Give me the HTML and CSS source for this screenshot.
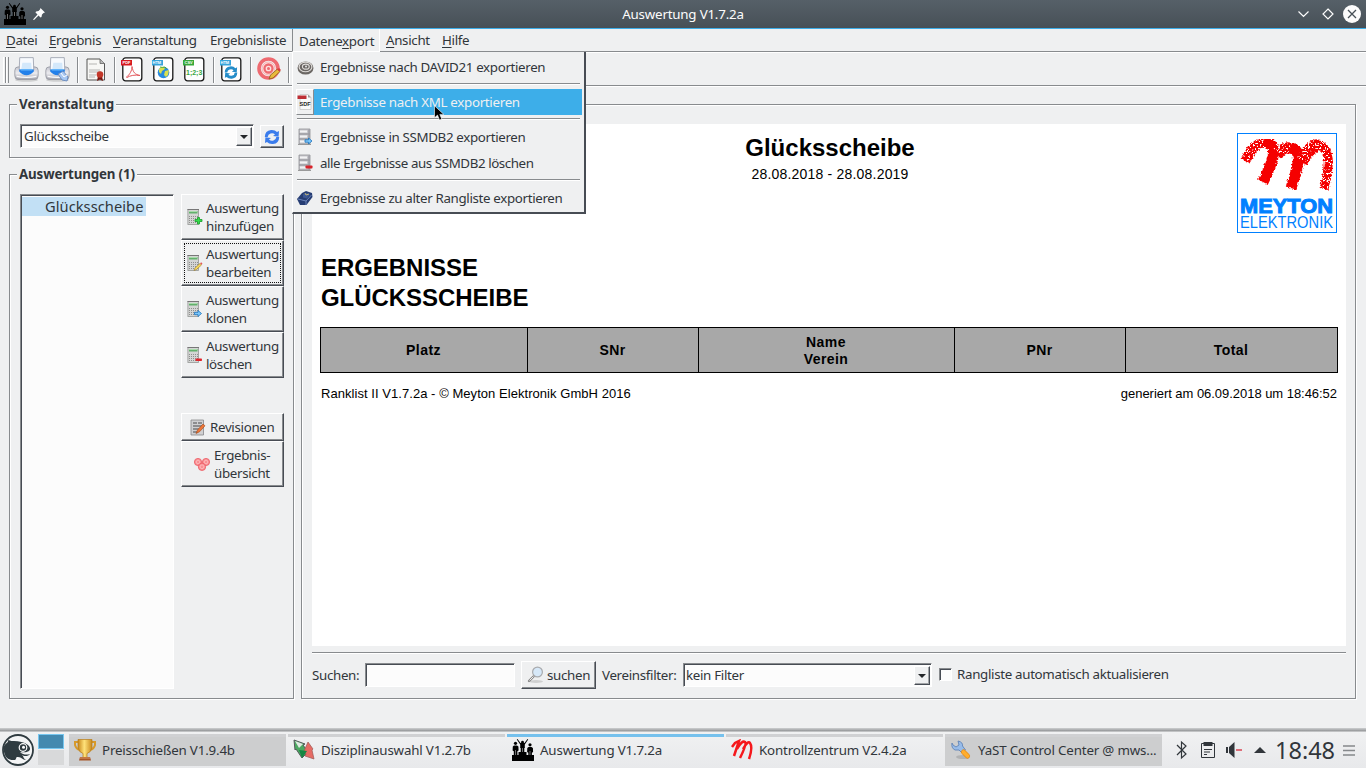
FILE: index.html
```html
<!DOCTYPE html>
<html lang="de">
<head>
<meta charset="utf-8">
<title>Auswertung V1.7.2a</title>
<link rel="stylesheet" href="styles.css">
</head>
<body>
<svg width="0" height="0" class="defs">
  <defs>
    <linearGradient id="gGrey" x1="0" y1="0" x2="0" y2="1"><stop offset="0" stop-color="#c4c5cf"/><stop offset=".5" stop-color="#ececf0"/><stop offset="1" stop-color="#a4a5ae"/></linearGradient>
    <linearGradient id="gGold" x1="0" y1="0" x2="1" y2="0"><stop offset="0" stop-color="#c8871a"/><stop offset=".45" stop-color="#ffe27a"/><stop offset="1" stop-color="#c98a1d"/></linearGradient>
    <filter id="crayon" x="-5%" y="-5%" width="110%" height="110%">
      <feTurbulence type="fractalNoise" baseFrequency=".45" numOctaves="2" seed="4" result="n"/>
      <feDisplacementMap in="SourceGraphic" in2="n" scale="4" xChannelSelector="R" yChannelSelector="G"/>
    </filter>
    <filter id="speckle" x="-5%" y="-5%" width="110%" height="110%">
      <feTurbulence type="fractalNoise" baseFrequency=".6" numOctaves="2" seed="9"/>
      <feColorMatrix values="0 0 0 0 1  0 0 0 0 1  0 0 0 0 1  12 0 0 0 -6.8"/>
      <feComposite in2="SourceGraphic" operator="in"/>
    </filter>
    <symbol id="podium" viewBox="0 0 22 22">
      <path d="M0 16h6.500v-3h8v3h7.500v6H0z"/><circle cx="3.500" cy="4.300" r="1.600"/><circle cx="10.500" cy="3.200" r="1.400"/><circle cx="18" cy="5.800" r="1.600"/>
      <path d="M2 6.500h3l1.400 1 .2 4-1.200.8v4H1.800v-4L.6 11.500l.2-4zM5.500 0l3 4h4l3-4 .7.500-3.400 5V9H8.200V5.500L4.800.5zM16.500 8h3l1.400 1 .2 4-1.200.8v3h-3.600v-3L15.100 13l.2-4z"/>
      <path d="M8.700 8.500h3.600V14H8.700z"/><path d="M3.500 11v5M10.500 9v4M18 12v4" stroke="#999" stroke-width=".7"/>
    </symbol>
    <symbol id="printer" viewBox="0 0 24 24">
      <ellipse cx="12" cy="22" rx="11" ry="1.800" fill="#0002"/>
      <path d="M.8 13Q.8 9.500 4 9.500h16q3.200 0 3.200 3.500v5q0 3.500-3 3.500H3.800q-3 0-3-3.500z" fill="url(#gGrey)" stroke="#9496a0" stroke-width=".8"/>
      <path d="M5.500.6h13l.5 12H5z" fill="#f7fafe" stroke="#9aa0ad" stroke-width=".8"/>
      <path d="M8 5.500h8.500l.5 6H7z" fill="#d3e8fb"/><path d="M5 12h14v2q-3 3.500-7 3.500T5 14z" fill="#2380ea"/><path d="M6.500 11.500h11V13h-11z" fill="#63b4fb"/>
      <path d="M2.500 18.500q9.500 2 19 0" stroke="#fbfbfd" stroke-width="1.200" fill="none"/>
    </symbol>
    <symbol id="page" viewBox="0 0 22 25">
      <rect x="1.800" y=".8" width="19" height="23" rx="2.800" fill="#fefefe" stroke="#171717" stroke-width="1.300"/>
    </symbol>
    <symbol id="sync" viewBox="0 0 16 16">
      <path d="M.8 8Q1 1.500 7 1q4-.3 6 2l2-1-.4 5.700L9 7l2-1.500Q9 3.500 6.500 4.500 4 5 3.700 8z"/>
      <path d="M15.200 8Q15 14.500 9 15q-4 .3-6-2l-2 1 .4-5.700L7 9l-2 1.500q2 2 4.500 1 2.500-.5 2.800-3.500z"/>
    </symbol>
    <symbol id="calc" viewBox="0 0 16 18">
      <rect x=".9" y="1.500" width="10.600" height="15" fill="#d4d5d4" stroke="#959795" stroke-width=".8"/><path d="M.5 1.500h11.500" stroke="#777"/>
      <rect x="2" y="3" width="8.500" height="2.500" fill="#62b06c"/><path d="M2 3.500h8" stroke="#a7dbaa"/>
      <path d="M2 8.500h9M2 10.500h9M2 12.500h9M2 14.500h9" stroke="#8e8f8e" stroke-dasharray="1 1"/>
    </symbol>
    <symbol id="db" viewBox="0 0 16 18">
      <path d="M2 1h11v15H2z" fill="#c6c6cb" stroke="#909096" stroke-width=".8"/>
      <path d="M2 6h11M2 11h11" stroke="#88888f"/><path d="M3 3.500h7M3 8.500h7M3 13.500h7" stroke="#f2f2f4" stroke-width="2"/><path d="M12 1.500v14" stroke="#9c9ca4" stroke-width="1.500"/>
      <path d="M1 16.500h13" stroke="#999"/>
    </symbol>
    <symbol id="arrow" viewBox="0 0 8 7"><path d="M.5 2.300H4V.5l3.500 3L4 6.500V4.700H.5z" fill="#7cc7fa" stroke="#1c72bd" stroke-width=".8"/></symbol>
  </defs>
</svg>

<header class="titlebar">
  <svg class="title-app" width="22" height="22"><use href="#podium"/></svg>
  <svg class="pin" width="12" height="12" viewBox="0 0 12 12"><path d="M7.500 0 12 4.500 10.500 5 9 6.500 8.500 9 7.500 9.500 5.500 7.500 1 12 0 11.500 4.500 6.500 2.500 4.500 3 3.500 5.500 3 7 1.500z" fill="#fcfcfc"/></svg>
  <span class="title-text">Auswertung V1.7.2a</span>
  <svg class="winbtns" width="66" height="20" viewBox="0 0 66 20" fill="none" stroke="#fcfcfc" stroke-width="1.200"><path d="m1.500 7.500 5 5 5-5M31 5l5 5-5 5-5-5z"/><circle cx="55" cy="10" r="9" fill="#fcfcfc" stroke="none"/><path d="m51 6 8 8m0-8-8 8" stroke="#475057" stroke-width="1.300"/></svg>
</header>

<nav class="menubar">
  <span class="m1"><u>D</u>atei</span><span class="m2"><u>E</u>rgebnis</span><span class="m3"><u>V</u>eranstaltung</span><span class="m4">Ergebnisliste</span><span class="m5">Datene<u>x</u>port</span><span class="m6"><u>A</u>nsicht</span><span class="m7"><u>H</u>ilfe</span>
</nav>

<div class="toolbar">
  <i class="grip"></i><i class="grip"></i>
  <svg class="t-print" width="25" height="25"><use href="#printer"/></svg>
  <svg class="t-print2" width="25" height="25" viewBox="0 0 25 25"><use href="#printer" width="25" height="25"/><path d="M13 17l5-3 5 6-1 4-5-1z" fill="#a8c8f3" stroke="#5a7fb8" stroke-width=".8"/><path d="m16 16 3 4 3-2" stroke="#fff" fill="none"/></svg>
  <i class="tsep s1"></i>
  <svg width="20" height="24" viewBox="0 0 20 24"><path d="M1 1h13l4.500 4.500V22H1z" fill="#f7f7f5" stroke="#444" stroke-width=".9"/><path d="M14 1v4.500h4.500" fill="#bbb" stroke="#555" stroke-width=".7"/><path d="M3 6h8M3 12h11M3 14h12M3 17h7M3 19h6" stroke="#999" stroke-width=".7"/><path d="m12 18-1 5 3-1.500 3 1.500-1-5z" fill="#7b1710"/><circle cx="14" cy="16.500" r="3.300" fill="#c3382a"/></svg>
  <i class="tsep s2"></i>
  <svg class="t-pdf" width="22" height="25" viewBox="0 0 22 25"><use href="#page"/><path d="M0 3h11v5.500H0z" fill="#d71920"/><text x="1.500" y="7.300" class="tag">PDF</text><path d="M5 20.500c4-3 6-7 6-11 1 6 3 8 8 9-5-1-10 0-13 2" fill="none" stroke="#e2575b" stroke-width="1"/></svg>
  <svg class="t-html" width="22" height="25" viewBox="0 0 22 25"><use href="#page"/><path d="M0 3h11v5.500H0z" fill="#36a5dc"/><text x=".5" y="7.300" class="tag">HTM</text><circle cx="11.500" cy="15.500" r="5.800" fill="#278be0"/><path d="M7 12q3-3 5-2l1 2-3 2-1 3-2-2zM13 14l4-1-1 5-2 2-2-2z" fill="#d9df4f"/><path d="M8 10q3 1 5 0l2 2" stroke="#54ad36" fill="none"/></svg>
  <svg class="t-csv" width="22" height="25" viewBox="0 0 22 25"><use href="#page"/><path d="M0 3h11v5.500H0z" fill="#37a93b"/><text x="1.500" y="7.300" class="tag">CSV</text><text x="3" y="17.500" class="csv">1;2;3</text></svg>
  <i class="tsep s3"></i>
  <svg class="t-sync" width="22" height="25" viewBox="0 0 22 25"><use href="#page"/><path d="M0 3h11v5.500H0z" fill="#36a5dc"/><text x=".5" y="7.300" class="tag">HTM</text><use href="#sync" x="4" y="8.500" width="14" height="14" fill="#258dc9"/></svg>
  <i class="tsep s4"></i>
  <svg class="t-target" width="25" height="25" viewBox="0 0 25 25"><circle cx="11.500" cy="11.500" r="9.500" fill="none" stroke="#ee6a70" stroke-width="3.600"/><circle cx="11.500" cy="11.500" r="6.500" fill="#fde1df" stroke="#f9b4b3"/><circle cx="11.500" cy="11.500" r="4" fill="none" stroke="#ee6a70" stroke-width="2.300"/><circle cx="11.500" cy="11.500" r="1.500" fill="#ee6a70"/><path d="m12 22 1.500-4 7-6 2.500 2.500-7 6.500z" fill="#e8b93b" stroke="#8b5a1b" stroke-width=".8"/><path d="m20 12.500 2-1.500 2 2-1.500 1.500z" fill="#d93d3d"/></svg>
  <i class="tsep s5"></i>
</div>

<main class="main">
  <section class="left">
    <div class="group g-event">
      <b class="legend">Veranstaltung</b>
      <div class="combo c-event"><span>Glücksscheibe</span><i class="drop"></i></div>
      <div class="btn refresh"><svg width="16" height="16" fill="#3a7cec"><use href="#sync"/></svg></div>
    </div>
    <div class="group g-list">
      <b class="legend">Auswertungen (1)</b>
      <div class="list"><span class="sel">Glücksscheibe</span></div>
      <div class="buttons">
        <div class="btn big"><svg width="16" height="18"><use href="#calc"/><path d="M10.500 9.500h2v2h2.500v2h-2.500V16h-2v-2.500H8v-2h2.500z" fill="#35dd4c" stroke="#169c2b" stroke-width=".8"/></svg><span>Auswertung<br>hinzufügen</span></div>
        <div class="btn big focus"><svg width="16" height="18"><use href="#calc"/><path d="m7 16.500 1-2.500 5-4.500 1.500 1.500-5 4.500z" fill="#f8dc5c" stroke="#9a7628" stroke-width=".6"/><path d="m13 9.200 1.200-1 1.300 1.500-1 1z" fill="#e35858"/></svg><span>Auswertung<br>bearbeiten</span></div>
        <div class="btn big"><svg width="16" height="18"><use href="#calc"/><use href="#arrow" x="6.500" y="10" width="9" height="7"/></svg><span>Auswertung<br>klonen</span></div>
        <div class="btn big"><svg width="16" height="18"><use href="#calc"/><rect x="8.500" y="12.500" width="6.500" height="2.500" rx=".8" fill="#e0252c"/></svg><span>Auswertung<br>löschen</span></div>
        <div class="btn rev"><svg width="16" height="17" viewBox="0 0 16 17"><path d="M1 1h12.500v15H1z" fill="#d0d0d2" stroke="#88888b" stroke-width=".8"/><path d="M3 4h4M8 4h4M3 7h9M3 10h6M3 13h5" stroke="#77777a" stroke-width="1.400"/><path d="m6 14.500 1.500-3.500 5.500-6 2 1.800-5.500 6z" fill="#ee7739" stroke="#9e4719" stroke-width=".6"/></svg><span>Revisionen</span></div>
        <div class="btn over"><svg width="16" height="13" viewBox="0 0 16 13" fill="#f98f93" stroke="#ec5962" stroke-width=".8"><circle cx="4" cy="4" r="3.600"/><circle cx="12" cy="4" r="3.600"/><circle cx="8" cy="8.800" r="3.700"/><g fill="none" stroke="#ffc7c7" stroke-width=".7"><circle cx="4" cy="4" r="1.800"/><circle cx="12" cy="4" r="1.800"/><circle cx="8" cy="8.800" r="1.900"/></g></svg><span>Ergebnis-<br>übersicht</span></div>
      </div>
    </div>
  </section>

  <section class="group right">
    <article class="doc">
      <div class="doc-head">
        <div class="doc-title"><h1>Glücksscheibe</h1><p>28.08.2018 - 28.08.2019</p></div>
        <svg class="logo" width="100" height="100" viewBox="0 0 100 100">
          <rect x=".5" y=".5" width="99" height="99" fill="#fff" stroke="#0080ff"/>
          <g filter="url(#crayon)" fill="none" stroke="#f50000" stroke-linejoin="round">
            <path d="M8 28C14 17 20 10 27 9" stroke-width="10"/><path d="M26 9C38 10 42 17 26 49" stroke-width="11"/>
            <path d="M40 23C44 16 48 14 53 15 65 17 63 28 54 55" stroke-width="11"/>
            <path d="M64 29C70 17 77 12 82 13" stroke-width="13"/><path d="M81 12C94 15 93 32 87 56" stroke-width="9"/>
          </g>
          <g filter="url(#speckle)" fill="none" stroke="#000">
            <path d="M6 29C13 17 18 10 27 9M41 19C44 15 47 13 53 15M65 27C70 15 76 11 82 12 95 16 93 34 88 57" stroke-width="11"/>
          </g>
          <text x="3" y="80" textLength="93" lengthAdjust="spacingAndGlyphs" class="logo1">MEYTON</text>
          <text x="3" y="95" textLength="93" lengthAdjust="spacingAndGlyphs" class="logo2">ELEKTRONIK</text>
        </svg>
      </div>
      <h2>ERGEBNISSE<br>GLÜCKSSCHEIBE</h2>
      <div class="table"><span>Platz</span><span>SNr</span><span>Name<br>Verein</span><span>PNr</span><span>Total</span></div>
      <div class="foot"><span class="f1">Ranklist II V1.7.2a - © Meyton Elektronik GmbH 2016</span><span class="f2">generiert am 06.09.2018 um 18:46:52</span></div>
    </article>
    <hr class="rule">
    <div class="search">
      <label class="l1">Suchen:</label><div class="input"></div>
      <div class="btn find"><svg width="18" height="18" viewBox="0 0 18 18"><ellipse cx="9" cy="15.500" rx="7" ry="1.500" fill="#0002"/><path d="m2 15 5-5" stroke="#888" stroke-width="2.400" stroke-linecap="round"/><path d="m2.500 14.500 4-4" stroke="#eee"/><circle cx="10.500" cy="6" r="4.900" fill="#d6e8f8" stroke="#a9abae" stroke-width="1.200"/></svg><span>suchen</span></div>
      <label class="l2">Vereinsfilter:</label>
      <div class="combo c-filter"><span>kein Filter</span><i class="drop"></i></div>
      <i class="check"></i><label class="l3">Rangliste automatisch aktualisieren</label>
    </div>
  </section>
</main>

<footer class="panel">
  <svg class="suse" width="32" height="32" viewBox="0 0 32 32"><circle cx="16" cy="16" r="15" fill="#f4f5f6" stroke="#2f3b40" stroke-width="1.800"/><path d="M2 12C4 9 7 8 6 6c3 1 4 1 6 1 5 0 10 1 14 4 2 2 3 4 1 6-3 2-7 1-9 1 3 3 7 3 10 2-2 3-7 2-8 1 2 2 1 3 4 5-4 0-4-3-8-3-3 0-1 2-3 3-5 0-9 0-11-8z" fill="#2f3b40"/><circle cx="21" cy="13.500" r="3.800" fill="#2f3b40" stroke="#fff" stroke-width="1.200"/><circle cx="21.500" cy="13.300" r="1.500" fill="#fff"/></svg>
  <div class="pager"><i></i><i></i></div>
  <div class="tasks">
    <div class="task min"><svg width="22" height="22" viewBox="0 0 22 22"><path d="M4 3H1v3q1 4 5 5M18 3h3v3q-1 4-5 5" fill="none" stroke="#d79a2b" stroke-width="2"/><path d="M4 .5h14v8q-1 5-5 6v4H9v-4q-4-1-5-6z" fill="url(#gGold)" stroke="#b67b1b" stroke-width=".7"/><path d="M6 18h10l1 3.500H5z" fill="#a75426"/><path d="M6 19h10" stroke="#dc9a67"/></svg><span>Preisschießen V1.9.4b</span></div>
    <div class="task"><svg width="22" height="22" viewBox="0 0 22 22"><path d="m1 1 11 4-2 1 5 7-6 6-6-9-1 1z" fill="#4ba861" stroke="#55595a"/><path d="m2 2 8 3-4 4z" fill="#dfe9e1"/><path d="m15 3 5 7-1 1 2 9-9-3 1-2-2-3z" fill="#e66b64" stroke="#9b5955" stroke-width=".7"/><path d="m6 11 8 1-5 7z" fill="#168642"/></svg><span>Disziplinauswahl V1.2.7b</span></div>
    <div class="task active"><svg width="22" height="22"><use href="#podium"/></svg><span>Auswertung V1.7.2a</span></div>
    <div class="task"><svg width="22" height="22" viewBox="0 0 22 22"><path d="M1 8 4 4 8 2 3 17M6 10Q11 1 14 3q2 2-5 16m3-9q5-9 7-6 3 4-1 16" fill="none" stroke="#f5181c" stroke-width="2.500"/></svg><span>Kontrollzentrum V2.4.2a</span></div>
    <div class="task min"><svg width="22" height="22" viewBox="0 0 22 22"><ellipse cx="13" cy="18" rx="7" ry="2" fill="#0002"/><path d="M2 4q-1 5 3 7l4 0 3 3 3.500-3-3-4q.5-4-4.500-5l1 4-3 2-3-2z" fill="#98bce9" stroke="#6085b8" stroke-width=".9"/><path d="m13.500 13 4 4" stroke="#e58a14" stroke-width="5" stroke-linecap="round"/><path d="m13.500 13 4 4" stroke="#ffad2e" stroke-width="3.700" stroke-linecap="round"/></svg><span>YaST Control Center @ mws...</span></div>
  </div>
  <svg class="tray" width="92" height="20" viewBox="0 0 92 20"><path d="M1 5 10 14 5.500 18V2L10 6 1 15" fill="none" stroke="#31363b" stroke-width="1.200"/><path d="M25.500 3.500h13v14h-13z" fill="none" stroke="#31363b"/><path d="M27.500 2h9v4h-9z" fill="#31363b"/><path d="M28 9.500h8M28 12h6M28 14.500h3" stroke="#31363b"/><path d="M50 7h2v6h-2zM53 7l5.500-5v16l-5.500-5z" fill="#31363b"/><path d="M60 10h6" stroke="#da4453" stroke-width="1.500"/><path d="m78 13 6-6 6 6z" fill="#31363b"/></svg>
  <span class="clock">18:48</span>
  <svg class="burger" width="12" height="11" viewBox="0 0 12 11"><path d="M0 1h12M0 5.500h12M0 10h12" stroke="#85888b" stroke-width="1.600"/></svg>
</footer>

<div class="popup">
  <div class="item"><i class="ico"><svg width="17" height="17" viewBox="0 0 16 16"><ellipse cx="8" cy="8.500" rx="7.500" ry="6.200" fill="#6b6764"/><g fill="none" stroke="#dedbd8" stroke-width="1.100"><ellipse cx="8" cy="7.500" rx="6" ry="4.500"/><ellipse cx="8.300" cy="7.200" rx="3.200" ry="2.400"/></g><circle cx="8.500" cy="7" r="1" fill="#ddd"/></svg></i><span>Ergebnisse nach DAVID21 exportieren</span></div>
  <hr>
  <div class="item hot"><i class="ico"><svg width="16" height="16" viewBox="0 0 16 16"><path d="M3 .5h8l3 3v12H3z" fill="#fafafa" stroke="#c7c7c7" stroke-width=".8"/><path d="M11 .5v3h3z" fill="#999"/><path d="M.5 1.500h9v3.500h-9z" fill="#bd2e34"/><text x="2.500" y="11.500" class="sdf">SDF</text></svg></i><span>Ergebnisse nach XML exportieren</span></div>
  <hr>
  <div class="item"><i class="ico"><svg width="16" height="18"><use href="#db"/><use href="#arrow" x="7" y="9.500" width="9" height="7"/></svg></i><span>Ergebnisse in SSMDB2 exportieren</span></div>
  <div class="item"><i class="ico"><svg width="16" height="18"><use href="#db"/><rect x="8.500" y="11.500" width="7" height="3" rx=".8" fill="#d8232a"/></svg></i><span class="p4">alle Ergebnisse aus SSMDB2 löschen</span></div>
  <hr>
  <div class="item"><i class="ico"><svg width="16" height="16" viewBox="0 0 16 16"><path d="m0 9 5-6 4-2 6 2 .5 4-6 8L3 15z" fill="#263d73"/><path d="m1 9 8 2 5.500-6M9 11v4" stroke="#6b83b8" fill="none"/><path d="m6 4 4-1 3 1.500-3 4-4-1z" fill="#3d5892"/><path d="m8 3 1 2 3-1" stroke="#bdb27b" fill="none"/></svg></i><span>Ergebnisse zu alter Rangliste exportieren</span></div>
</div>
<svg class="cursor" width="11" height="17" viewBox="0 0 11 17"><path d="M.5.800v12l3-2.700 2 5 2.300-1-2-4.700h4z" fill="#000" stroke="#fff" stroke-width=".6"/></svg>
</body>
</html>
```
FILE: styles.css
```css
* { box-sizing: border-box; }
body { margin: 0; width: 1366px; height: 768px; overflow: hidden; position: relative; display: flex; flex-direction: column; background: #eff0f1; color: #31363b; font: 13.33px/18px "Noto Sans", sans-serif; letter-spacing: -.32px; white-space: nowrap; }
svg { display: block; flex: none; }
span, label { flex: none; }
.defs { position: absolute; }

.titlebar { flex: none; height: 29px; display: flex; align-items: center; background: linear-gradient(#566068, #475057); border-bottom: 1px solid #3daee9; color: #fcfcfc; padding: 0 3px 0 4px; letter-spacing: -.2px; }
.title-app { margin-right: 7px; }
.title-text { flex: 1; text-align: center; padding-left: 24px; }

.menubar { flex: none; height: 24px; display: flex; align-items: center; padding-left: 6px; border-bottom: 1px solid #fff; box-shadow: inset 0 -1px #888b8e; }
.menubar u { text-underline-offset: 2px; text-decoration-thickness: 1px; }
.menubar span { position: relative; }
.m1 { width: 43px; } .m2 { width: 64px; } .m3 { width: 97px; } .m4 { width: 82px; }
.menubar span:not(.m5) { padding-bottom: 1px; }
.m5 { width: 88px; height: 23px; padding: 2px 0 0 6px; margin-right: 6px; line-height: 20px; background: #eff0f1; border-left: 1px solid #888b8e; border-right: 1px solid #fff; border-bottom: 1px solid #fff; }
.m6 { width: 56px; }

.toolbar { flex: none; height: 34px; display: flex; align-items: center; padding-left: 3px; border-bottom: 1px solid #fff; box-shadow: inset 0 -1px #888b8e; }
.grip { width: 3px; height: 26px; border-right: 1px solid #888b8e; border-left: 1px solid #fff; }
.t-print { margin-left: 5px; } .t-print2 { margin-left: 6px; }
.tsep { width: 2px; height: 26px; border-left: 1px solid #888b8e; border-right: 1px solid #fff; }
.s1 { margin: 0 7px 0 7px; } .s2 { margin: 0 5px 0 8px; } .s3 { margin: 0 5px 0 8px; } .s4 { margin: 0 5px 0 8px; } .s5 { margin-left: 6px; }
.t-html, .t-csv { margin-left: 9px; }
.tag { font: bold 4px "Liberation Sans", sans-serif; fill: #fff; letter-spacing: 0; }
.csv { font: bold 7px "Liberation Sans", sans-serif; fill: #39a73d; letter-spacing: 0; }
.sdf { font: bold 5.500px "Liberation Sans", sans-serif; fill: #222; letter-spacing: 0; }

.main { flex: none; height: 641px; display: flex; gap: 7px; padding: 17px 9px 29px; }
.left { width: 285px; display: flex; flex-direction: column; gap: 16px; }
.group { position: relative; border: 1px solid #888b8e; box-shadow: 1px 1px #fff, inset 1px 1px #fff; }
.legend { position: absolute; left: 7px; top: -10px; padding: 0 2px; background: #eff0f1; letter-spacing: .05px; }
.g-list .legend { letter-spacing: -.15px; }
.g-event { height: 54px; display: flex; padding: 19px 0 0 10px; gap: 6px; }
.g-list { height: 525px; display: flex; padding: 19px 0 0 10px; gap: 7px; }
.combo, .input, .list { background: #fcfcfc; border: 1px solid; border-color: #888b8e #fff #fff #888b8e; box-shadow: inset 1px 1px #474c54; }
.combo { height: 24px; display: flex; justify-content: space-between; padding: 2px 1px 1px 3px; line-height: 19px; }
.c-event { width: 234px; }
.drop { width: 16px; height: 19px; background: #eff0f1; border: 1px solid; border-color: #fff #474c54 #474c54 #fff; box-shadow: inset -1px -1px #a0a3a6; display: grid; place-items: center; }
.drop::after { content: ""; border: 4px solid transparent; border-top-color: #232629; border-bottom: 0; }
.btn { display: flex; align-items: center; border: 1px solid; border-color: #fff #474c54 #474c54 #fff; box-shadow: inset -1px -1px #888b8e; position: relative; }
.refresh { width: 24px; height: 23px; margin-top: 1px; justify-content: center; }
.list { width: 154px; height: 495px; padding: 2px 0 0 1px; }
.sel { display: block; width: 124px; height: 19px; line-height: 19px; padding-left: 23px; background: #c2e0f5; font-size: 14.670px; letter-spacing: .05px; }
.buttons { width: 103px; }
.big { height: 46px; padding-left: 5px; gap: 3px; }
.focus::after { content: ""; position: absolute; inset: 2px; border: 1px dotted #111; }
.rev { height: 28px; margin-top: 35px; padding-left: 8px; gap: 4px; }
.over { height: 46px; padding-left: 12px; gap: 4px; }

.right { width: 1055px; padding: 19px 9px 0 10px; }
.doc { width: 1034px; height: 522px; background: #fff; color: #000; padding: 9px 8px; font-family: "Liberation Sans", sans-serif; letter-spacing: 0; }
.doc-head { height: 120px; display: flex; justify-content: flex-end; gap: 322px; padding-right: 1px; }
.doc-title { width: 170px; text-align: center; }
.doc h1 { margin: 1px 0 0; font-size: 24px; line-height: 28px; }
.doc-title p { margin: 2px 0 0; font-size: 14px; line-height: 20px; letter-spacing: .2px; }
.logo text { letter-spacing: 0; fill: #0080ff; }
.logo1 { font: bold 21px "Liberation Sans", sans-serif; stroke: #0080ff; stroke-width: 1px; }
.logo2 { font: 16.500px "Liberation Sans", sans-serif; }
.doc h2 { margin: 0 0 0 1px; font-size: 24px; line-height: 30px; letter-spacing: -.05px; }
.table { margin-top: 14px; height: 46px; width: 1018px; display: grid; grid-template-columns: 207px 171px 256px 171px 1fr; border: 1px solid #000; background: #a8a8a8; font-weight: bold; font-size: 14px; line-height: 17px; text-align: center; letter-spacing: .45px; }
.table span { display: grid; place-content: center; border-right: 1px solid #000; padding-right: 1px; }
.table span:nth-child(3) { padding-top: 1px; }
.table span:last-child { border: 0; }
.foot { display: flex; justify-content: space-between; padding: 0 1px; margin-top: 11px; font-size: 13px; line-height: 20px; }
.f1 { letter-spacing: .05px; } .f2 { letter-spacing: -.04px; }
.rule { margin: 6px 0 7px; width: 1034px; border: 0; height: 2px; background: #fff; border-top: 1px solid #888b8e; }
.search { display: flex; align-items: center; height: 28px; }
.l1 { width: 53px; } .input { width: 150px; height: 24px; margin-right: 6px; }
.find { width: 75px; height: 28px; padding-left: 5px; gap: 2px; margin-right: 6px; }
.l2 { width: 81px; }
.c-filter { width: 249px; margin-right: 7px; padding-left: 2px; }
.check { width: 13px; height: 13px; margin: -2px 5px 0 0; background: #fcfcfc; border: 1px solid; border-color: #888b8e #fff #fff #888b8e; box-shadow: inset 1px 1px #474c54; }
.l3 { margin-top: -2px; }

.panel { flex: none; height: 40px; display: flex; padding: 6px 0 0 2px; background: linear-gradient(#cdcfd0 0, #a9abad 2px, #929496 3px, #f0f1f2 4px, #e8e9eb 100%); letter-spacing: -.17px; }
.pager { width: 26px; display: flex; flex-direction: column; gap: 1px; margin: 0 5px 0 4px; }
.pager i { height: 15px; background: #d8d9da; }
.pager i:first-child { background: #4489af; border: 1px solid #76c6ef; }
.tasks { display: flex; gap: 2px; }
.task { width: 217px; height: 32px; display: flex; align-items: center; gap: 6px; padding-left: 5px; box-shadow: inset 0 3px #d0d1d3; }
.min { background: #cdcecf; }
.active { box-shadow: inset 0 3px #76c1ed; }
.tray { margin: 6px 0 0 14px; }
.clock { font-size: 23.500px; line-height: 32px; margin-left: 7px; width: 59px; letter-spacing: 0; }
.burger { margin: 11px 0 0 9px; }

.popup { position: absolute; left: 292px; top: 52px; width: 294px; height: 162px; padding: 2px 2px 2px 3px; background: #eff0f1; border: solid; border-width: 0 2px 2px 1px; border-color: #fff #474c54 #474c54 #fff; }
.item { height: 26px; display: flex; align-items: center; letter-spacing: -.34px; }
.p4 { letter-spacing: -.41px; }
.ico { width: 18px; height: 26px; margin-right: 6px; display: grid; place-items: center; }
.popup hr { margin: 3px 2px 4px 1px; border: 0; height: 2px; background: #fff; border-top: 1px solid #888b8e; }
.hot { background: #3daee9; color: #eff0f1; letter-spacing: -.3px; }
.hot .ico { background: #eff0f1; border: 1px solid; border-color: #fff #888b8e #888b8e #fff; }
.cursor { position: absolute; left: 434px; top: 105px; }
```
